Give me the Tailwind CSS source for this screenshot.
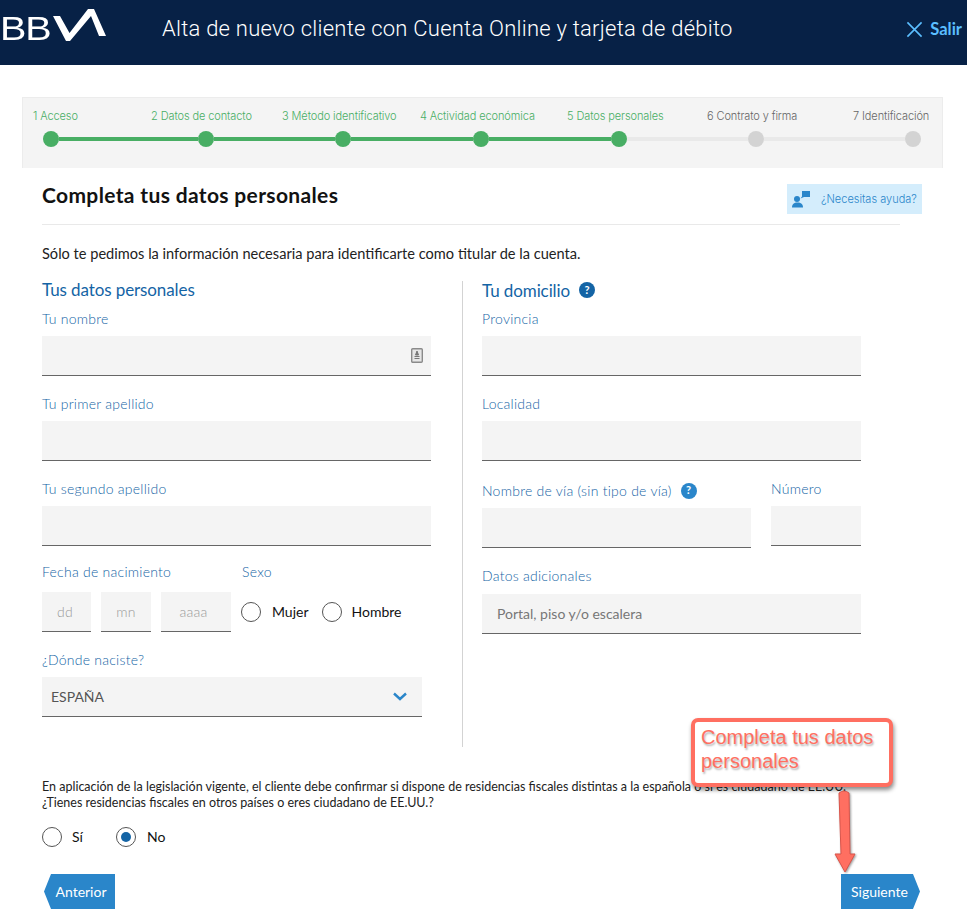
<!DOCTYPE html>
<html lang="es">
<head>
  <meta charset="UTF-8">
  <meta name="viewport" content="width=device-width, initial-scale=1.0" />
  <title>Alta de nuevo cliente</title>
  <script src="https://cdn.jsdelivr.net/npm/@tailwindcss/browser@4"></script>
</head>
<body class="bg-white h-[924px] overflow-hidden relative font-['Lato','Open_Sans',sans-serif] text-[#121212]">

  <!-- Header -->
  <header class="h-[65px] bg-[#072146] flex items-center text-white">
    <div class="w-[162px] h-full flex items-center shrink-0 relative">
      <span class="absolute left-0 top-[10px] font-['Liberation_Sans',sans-serif] text-[33px] leading-[38px] tracking-[-1px] origin-left scale-x-[1.2]">BB</span>
      <svg class="absolute left-0 top-0" width="110" height="45" viewBox="0 0 110 45" aria-hidden="true">
        <polygon fill="#fff" points="53,16 60,16 69.500,33 88,9 94,9 106,36 99,36 91,16 70,41 66,41"/>
      </svg>
    </div>
    <h1 class="text-[22px] font-light font-['Roboto',sans-serif] flex-1 tracking-[0.24px] -mt-[8px]">Alta de nuevo cliente con Cuenta Online y tarjeta de débito</h1>
    <div class="flex items-center gap-[7px] pr-[5px] -mt-[7px]">
      <svg width="17" height="17" viewBox="0 0 18 18" fill="none" stroke="#5bbeff" stroke-width="1.7" aria-hidden="true"><path d="M1.5 1.5 16.5 16.5M16.5 1.5 1.5 16.5"/></svg>
      <span class="text-[16.500px] font-bold text-[#5bbeff]">Salir</span>
    </div>
  </header>

  <!-- Stepper -->
  <div class="mt-[32px] mx-[22px] w-[921px] h-[71px] bg-[#f4f4f4] border border-[#ececec] border-b-0 relative text-[11px] leading-[14px] font-['Inter',sans-serif] font-light tracking-[-0.1px]">
    <div class="flex pt-[11px] text-[#48ae64]">
      <span class="ml-[10px] w-[118px]">1 Acceso</span>
      <span class="w-[131px]">2 Datos de contacto</span>
      <span class="w-[138px]">3 Método identificativo</span>
      <span class="w-[147px]">4 Actividad económica</span>
      <span class="w-[140px]">5 Datos personales</span>
      <span class="w-[146px] text-[#666]">6 Contrato y firma</span>
      <span class="text-[#666]">7 Identificación</span>
    </div>
    <div class="flex items-center mt-[8px] pl-[20px]">
      <span class="size-4 rounded-full bg-[#48ae64] shrink-0"></span>
      <span class="w-[139px] h-1 bg-[#48ae64]"></span>
      <span class="size-4 rounded-full bg-[#48ae64] shrink-0"></span>
      <span class="w-[121px] h-1 bg-[#48ae64]"></span>
      <span class="size-4 rounded-full bg-[#48ae64] shrink-0"></span>
      <span class="w-[122px] h-1 bg-[#48ae64]"></span>
      <span class="size-4 rounded-full bg-[#48ae64] shrink-0"></span>
      <span class="w-[122px] h-1 bg-[#48ae64]"></span>
      <span class="size-4 rounded-full bg-[#48ae64] shrink-0"></span>
      <span class="w-[121px] h-1 bg-[#e9e9e9]"></span>
      <span class="size-4 rounded-full bg-[#d3d3d3] shrink-0"></span>
      <span class="w-[141px] h-1 bg-[#e9e9e9]"></span>
      <span class="size-4 rounded-full bg-[#d3d3d3] shrink-0"></span>
    </div>
  </div>

  <main class="pl-[42px]">
    <!-- Title row -->
    <div class="w-[880px] flex items-start justify-between pt-[16px]">
      <h2 class="text-[21px] leading-[24px] font-bold tracking-[0.35px] -mt-[1px]">Completa tus datos personales</h2>
      <a class="h-[30px] w-[135px] bg-[#d4edfc] flex items-center pl-[5px] gap-[11px] text-[11px] text-[#2a86ca]">
        <svg width="18" height="17" viewBox="0 0 18 17" fill="#2a86ca" aria-hidden="true"><circle cx="5" cy="8" r="3"/><path d="M0 16.500c0-3.500 2-5 5.500-5s5.500 1.500 5.500 5z"/><path d="M10 0h8v6h-6l-3.500 1.500L10 5.500z"/></svg>
        <span class="font-['Inter',sans-serif] font-light mt-[1px]">¿Necesitas ayuda?</span>
      </a>
    </div>
    <div class="w-[858px] h-px bg-[#e9e9e9] mt-[10px]"></div>
    <p class="text-[14.600px] leading-[18px] mt-[20px] text-[#222]">Sólo te pedimos la información necesaria para identificarte como titular de la cuenta.</p>

    <!-- Two columns -->
    <div class="flex mt-[18px] text-[14px] text-[#1464a5] font-light tracking-[0.25px]">
      <section class="w-[421px] h-[466px] border-r border-[#d3d3d3]">
        <h3 class="text-[17px] leading-[20px] text-[#1464a5] font-normal -mt-[1px] mb-[1px] tracking-[-0.1px]">Tus datos personales</h3>
        <div class="h-[35px] flex items-end pb-[7px]"><label>Tu nombre</label></div>
        <div class="w-[389px] h-10 bg-[#f4f4f4] border-b border-[#666] flex items-center justify-end pr-[8px]">
          <svg width="12" height="15" viewBox="0 0 12 15" fill="none" aria-hidden="true"><rect x="0.700" y="0.700" width="10.600" height="13.600" rx="1" fill="#e6e6e6" stroke="#8a8a8a" stroke-width="1.400"/><path d="M6 3 7.500 7h-3zM3.500 8.500h5M3.500 10.500h5" stroke="#777" fill="#777"/></svg>
        </div>
        <div class="h-[45px] flex items-end pb-[7px]"><label>Tu primer apellido</label></div>
        <div class="w-[389px] h-10 bg-[#f4f4f4] border-b border-[#666]"></div>
        <div class="h-[45px] flex items-end pb-[7px]"><label>Tu segundo apellido</label></div>
        <div class="w-[389px] h-10 bg-[#f4f4f4] border-b border-[#666]"></div>
        <div class="flex h-[46px] items-end pb-[10px]">
          <label class="w-[200px]">Fecha de nacimiento</label>
          <label>Sexo</label>
        </div>
        <div class="flex items-center text-[14px] text-[#999]">
          <div class="w-[49px] h-10 bg-[#f4f4f4] border-b border-[#666] flex items-center justify-center pr-[3px]">dd</div>
          <div class="w-[50px] h-10 bg-[#f4f4f4] border-b border-[#666] flex items-center justify-center ml-[10px]">mn</div>
          <div class="w-[70px] h-10 bg-[#f4f4f4] border-b border-[#666] flex items-center justify-center ml-[10px] pr-[5px]">aaaa</div>
          <span class="size-5 rounded-full border border-[#555] ml-[10px]"></span>
          <span class="text-[#121212] ml-[11px] -mt-[2px] font-normal tracking-normal">Mujer</span>
          <span class="size-5 rounded-full border border-[#555] ml-[13px]"></span>
          <span class="text-[#121212] ml-[10px] -mt-[2px] font-normal tracking-normal">Hombre</span>
        </div>
        <div class="h-[45px] flex items-end pb-[7px]"><label>¿Dónde naciste?</label></div>
        <div class="w-[380px] h-10 bg-[#f4f4f4] border-b border-[#666] flex items-center justify-between pl-[9px] pr-[15px] text-[#555] font-normal tracking-normal">
          <span>ESPAÑA</span>
          <svg width="14" height="9" viewBox="0 0 14 9" fill="none" stroke="#2a86ca" stroke-width="2.400" aria-hidden="true"><path d="M1 1.500 7 7l6-5.500"/></svg>
        </div>
      </section>

      <section class="pl-[19px] w-[399px]">
        <h3 class="text-[17px] leading-[20px] text-[#1464a5] font-normal flex items-center gap-[9px] tracking-[-0.1px]">Tu domicilio
          <span class="size-4 rounded-full bg-[#1464a5] text-white text-[11px] font-bold flex items-center justify-center -mt-[3px]">?</span>
        </h3>
        <div class="h-[35px] flex items-end pb-[7px]"><label>Provincia</label></div>
        <div class="h-10 bg-[#f4f4f4] border-b border-[#666] w-[379px]"></div>
        <div class="h-[45px] flex items-end pb-[7px]"><label>Localidad</label></div>
        <div class="h-10 bg-[#f4f4f4] border-b border-[#666] w-[379px]"></div>
        <div class="flex mt-[19px] gap-[20px] w-[379px]">
          <div class="w-[269px]">
            <label class="flex items-center gap-[9px] h-[19px] mt-[1px]">Nombre de vía (sin tipo de vía)
              <span class="size-4 rounded-full bg-[#2a86ca] text-white text-[11px] font-bold flex items-center justify-center">?</span>
            </label>
            <div class="h-10 bg-[#f4f4f4] border-b border-[#666] mt-[8px]"></div>
          </div>
          <div class="w-[90px]">
            <label class="block leading-[18px]">Número</label>
            <div class="h-10 bg-[#f4f4f4] border-b border-[#666] mt-[8px]"></div>
          </div>
        </div>
        <div class="h-[46px] flex items-end pb-[8px]"><label>Datos adicionales</label></div>
        <div class="h-10 bg-[#f4f4f4] border-b border-[#666] w-[379px] flex items-center pl-[15px] pb-[1px] text-[#777] font-normal tracking-normal">Portal, piso y/o escalera</div>
      </section>
    </div>

    <!-- Residencia fiscal -->
    <p class="text-[12.500px] leading-[16px] mt-[32px] whitespace-nowrap text-[#222]">En aplicación de la legislación vigente, el cliente debe confirmar si dispone de residencias fiscales distintas a la española o si es ciudadano de EE.UU.<br>¿Tienes residencias fiscales en otros países o eres ciudadano de EE.UU.?</p>
    <div class="flex items-center mt-[16px] text-[14px] leading-[20px]">
      <span class="size-5 rounded-full border border-[#555]"></span>
      <span class="ml-[10px] w-[44px]">Sí</span>
      <span class="size-5 rounded-full border border-[#555] flex items-center justify-center"><span class="size-[10px] rounded-full bg-[#1464a5]"></span></span>
      <span class="ml-[11px]">No</span>
    </div>

    <!-- Nav buttons -->
    <div class="flex justify-between w-[878px] mt-[27px] text-[14px] text-white">
      <a class="h-[35px] w-[71px] ml-[2px] bg-[#2a86ca] flex items-center justify-center pl-[3px] pb-[1px] [clip-path:polygon(7px_0,100%_0,100%_100%,7px_100%,0_50%)]">Anterior</a>
      <a class="h-[35px] w-[79px] bg-[#2a86ca] flex items-center pl-[10px] pb-[1px] [clip-path:polygon(0_0,72px_0,100%_50%,72px_100%,0_100%)]">Siguiente</a>
    </div>
  </main>

  <!-- Annotation drawn over the screenshot -->
  <div class="absolute left-[691px] top-[718px] w-[202px] h-[69px] bg-white border-[4px] border-[#ff6f61] rounded-[7px] shadow-[1px_3px_4px_rgba(0,0,0,0.45)] px-[6px] pt-[3px] font-['Liberation_Sans',sans-serif] text-[20px] leading-[24px] text-[#ff6f61] [text-shadow:1px_2px_2px_rgba(0,0,0,0.3)]">Completa tus datos personales</div>
  <svg class="absolute left-[825px] top-[788px] drop-shadow-[1px_1px_1px_rgba(0,0,0,0.4)]" width="40" height="90" viewBox="0 0 40 90" aria-hidden="true">
    <path d="M14 5Q19 1 24 5L25 66H30L20 84 10 66H16Z" fill="#ff6f61" stroke="#d9544a" stroke-width="1"/>
  </svg>
</body>
</html>
